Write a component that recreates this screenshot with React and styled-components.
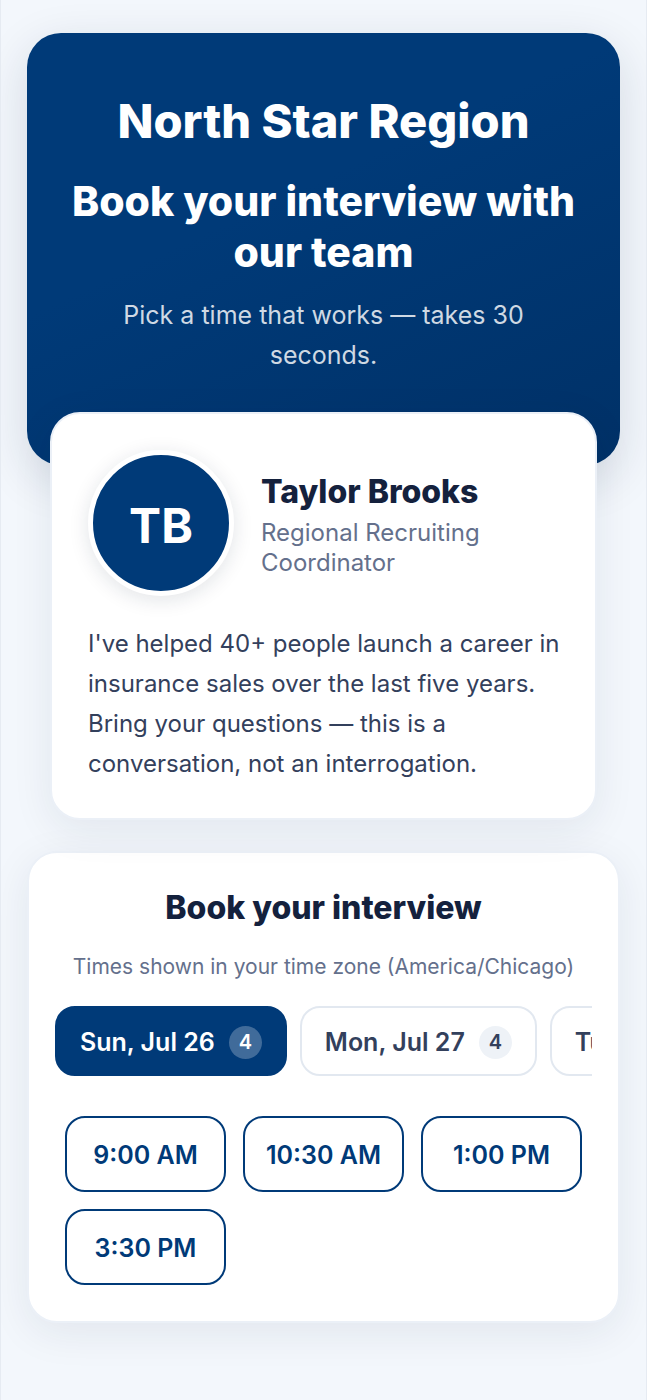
import React, { useState } from "react";
import styled, { createGlobalStyle } from "styled-components";

const navy = "#003a78";

const GlobalStyle = createGlobalStyle`
  * { box-sizing: border-box; }
  body {
    margin: 0;
    background: #f3f7fc;
    color: #14213d;
    font-family: Inter, "Liberation Sans", sans-serif;
  }
  h1, h2, p { margin: 0; padding: 0; }
  button { font: inherit; cursor: pointer; }
`;

const Page = styled.main`
  min-height: 100vh;
  padding: 33px 26px 78px;
  border: solid #e6ebf2;
  border-width: 0 1px;
  overflow: hidden;
`;

const Hero = styled.header`
  padding: 59px 36px 90px;
  border-radius: 34px;
  background: linear-gradient(155deg, ${navy} 0%, ${navy} 40%, #003167 100%);
  box-shadow: 0 14px 48px rgba(20, 33, 61, 0.14);
  color: #fff;
  text-align: center;
`;

const Region = styled.p`
  font-size: 47px;
  line-height: 58px;
  font-weight: 800;
`;

const Headline = styled.h1`
  margin-top: 26px;
  font-size: 41px;
  line-height: 51px;
  font-weight: 800;
`;

const Tagline = styled.p`
  max-width: 440px;
  margin: 17px auto 0;
  font-size: 25px;
  line-height: 40px;
  color: rgba(255, 255, 255, 0.82);
`;

const Card = styled.section`
  border: 2px solid #ebf0f7;
  border-radius: 30px;
  background: #fff;
  box-shadow: 0 10px 40px rgba(20, 33, 61, 0.08);
`;

const ProfileCard = styled(Card)`
  position: relative;
  margin: -53px 23px 0;
  padding: 36px 34px 34px 36px;
`;

const Person = styled.div`
  display: flex;
  align-items: center;
  gap: 27px;
`;

const Avatar = styled.div`
  display: grid;
  place-items: center;
  flex: none;
  width: 146px;
  height: 146px;
  padding-top: 4px;
  border: 5px solid #fff;
  border-radius: 50%;
  background: ${navy};
  box-shadow: 0 4px 20px rgba(20, 33, 61, 0.12);
  color: #fff;
  font-size: 48px;
  font-weight: 700;
`;

const PersonText = styled.div`
  padding-top: 4px;
`;

const Name = styled.h2`
  font-size: 32px;
  line-height: 40px;
  font-weight: 800;
`;

const Role = styled.p`
  margin-top: 6px;
  font-size: 24px;
  line-height: 30px;
  color: #64708c;
`;

const Bio = styled.p`
  margin-top: 28px;
  font-size: 24px;
  line-height: 40px;
  color: #33405c;
`;

const BookingCard = styled(Card)`
  margin-top: 31px;
  padding: 35px 26px 36px;
`;

const BookingTitle = styled(Name)`
  text-align: center;
`;

const ZoneNote = styled.p`
  margin-top: 24px;
  font-size: 21px;
  line-height: 30px;
  color: #64708c;
  text-align: center;
`;

const DayList = styled.div`
  display: flex;
  gap: 13px;
  margin-top: 24px;
  overflow-x: auto;
  scrollbar-width: none;
`;

const DayTab = styled.button`
  display: flex;
  align-items: center;
  flex: none;
  gap: 14px;
  height: 70px;
  padding: 2px 23px 0;
  border: 2px solid ${(p) => (p.$active ? navy : "#e2e8f0")};
  border-radius: 20px;
  background: ${(p) => (p.$active ? navy : "#fff")};
  color: ${(p) => (p.$active ? "#fff" : "#33405c")};
  font-size: 25px;
  font-weight: 600;
  white-space: nowrap;
`;

const Count = styled.span`
  display: grid;
  place-items: center;
  width: 33px;
  height: 33px;
  border-radius: 50%;
  background: ${(p) => (p.$active ? "rgba(255, 255, 255, 0.25)" : "#eef2f7")};
  font-size: 20px;
`;

const SlotGrid = styled.div`
  display: grid;
  grid-template-columns: repeat(3, 1fr);
  gap: 17px;
  margin: 40px 10px 0;
`;

const Slot = styled.button`
  height: 76px;
  padding: 2px 0 0;
  border: 2px solid ${navy};
  border-radius: 20px;
  background: #fff;
  color: ${navy};
  font-size: 25px;
  font-weight: 600;
`;

const days = ["Sun, Jul 26", "Mon, Jul 27", "Tue, Jul 28"];
const slots = ["9:00 AM", "10:30 AM", "1:00 PM", "3:30 PM"];

export default function App() {
  const [selected, setSelected] = useState(days[0]);
  return (
    <>
      <GlobalStyle />
      <Page>
        <Hero>
          <Region>North Star Region</Region>
          <Headline>Book your interview with our team</Headline>
          <Tagline>Pick a time that works — takes 30 seconds.</Tagline>
        </Hero>
        <ProfileCard>
          <Person>
            <Avatar>TB</Avatar>
            <PersonText>
              <Name>Taylor Brooks</Name>
              <Role>Regional Recruiting Coordinator</Role>
            </PersonText>
          </Person>
          <Bio>
            I've helped 40+ people launch a career in insurance sales over the
            last five years. Bring your questions — this is a conversation, not
            an interrogation.
          </Bio>
        </ProfileCard>
        <BookingCard>
          <BookingTitle>Book your interview</BookingTitle>
          <ZoneNote>Times shown in your time zone (America/Chicago)</ZoneNote>
          <DayList>
            {days.map((day) => (
              <DayTab
                key={day}
                type="button"
                $active={day === selected}
                aria-pressed={day === selected}
                onClick={() => setSelected(day)}
              >
                {day}
                <Count $active={day === selected}>4</Count>
              </DayTab>
            ))}
          </DayList>
          <SlotGrid>
            {slots.map((time) => (
              <Slot key={time} type="button">{time}</Slot>
            ))}
          </SlotGrid>
        </BookingCard>
      </Page>
    </>
  );
}
